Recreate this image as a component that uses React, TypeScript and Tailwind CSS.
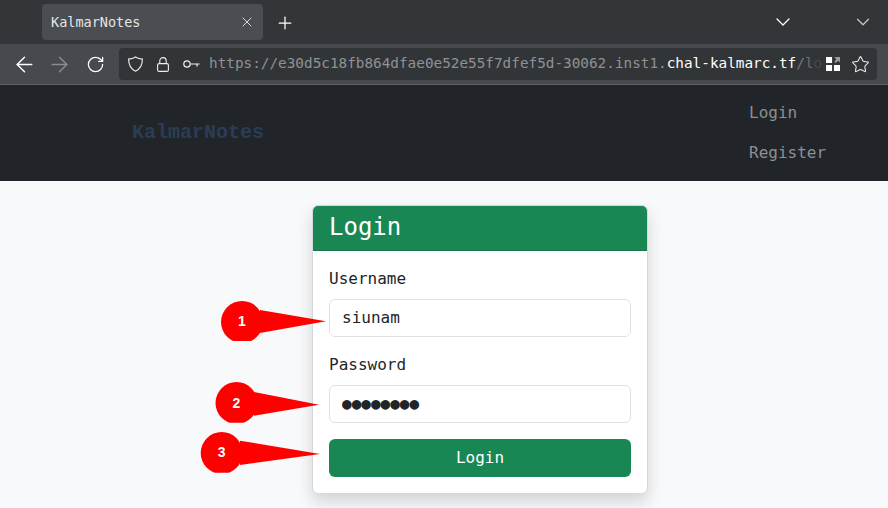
import { ArrowLeft, ArrowRight, ChevronDown, Plus, RotateCw, Star, X } from 'lucide-react';

const mono = "font-['DejaVu_Sans_Mono','Liberation_Mono',monospace]";

function ShieldIcon() {
    return (
        <svg width="15" height="16" viewBox="0 0 15 16" fill="none" stroke="#f0f0f0" strokeWidth="1.1">
            <path d="M7.500 1C9.500 2.300 12 3 14.400 3.100C14.400 9 12.500 13 7.500 15.200C2.500 13 .6 9 .6 3.100C3 3 5.500 2.300 7.500 1z" />
        </svg>
    );
}

function LockIcon() {
    return (
        <svg width="12" height="15" viewBox="0 0 12 15" fill="none" stroke="#f0f0f0" strokeWidth="1.1">
            <rect x=".6" y="6.600" width="10.800" height="7.800" rx="1.500" />
            <path d="M2.800 6.600V3.800a3.200 3.200 0 0 1 6.400 0v2.800" />
        </svg>
    );
}

function KeyIcon() {
    return (
        <svg width="17" height="10" viewBox="0 0 17 10" fill="none" stroke="#f0f0f0" strokeWidth="1.2">
            <circle cx="4" cy="5" r="3.200" />
            <path d="M7.500 5h9M14 5v2.500" />
        </svg>
    );
}

function QrIcon() {
    return (
        <svg width="14" height="14" viewBox="0 0 15 15">
            <path d="M0 0h6.500v6.500H0zM0 8.500h6.500V15H0zM8.500 8.500H15V15H8.500z" fill="#fff" />
            <path d="M9 0h6v6l-2-2-2.500 2.500-1.500-1.500L11 2.500z" fill="#9a9c9f" />
        </svg>
    );
}

// red callout markers drawn over the form
function Callouts() {
    const marks = [
        { n: '1', cx: 242, cy: 322, points: '260,310 326,321.300 260,333', clip: 341, textY: 326 },
        { n: '2', cx: 236.500, cy: 403, points: '254,392 319,404.700 254,415.700', clip: 422.700, textY: 407.500 },
        { n: '3', cx: 221.700, cy: 453, points: '240,440.700 320,454 240,465', clip: 472.700, textY: 457 },
    ];
    return (
        <svg className="absolute top-0 left-0 pointer-events-none" width="888" height="508">
            {marks.map((m) => (
                <g key={m.n}>
                    <clipPath id={`clip-${m.n}`}>
                        <rect x="0" y={m.clip - 60} width="400" height="60" />
                    </clipPath>
                    <g clipPath={`url(#clip-${m.n})`} fill="#ff0000">
                        <circle cx={m.cx} cy={m.cy} r="21" />
                        <polygon points={m.points} />
                    </g>
                    <text
                        x={m.cx}
                        y={m.textY}
                        textAnchor="middle"
                        fill="#fff"
                        fontSize="14"
                        fontWeight="700"
                        fontFamily="'Liberation Sans', sans-serif"
                    >
                        {m.n}
                    </text>
                </g>
            ))}
        </svg>
    );
}

function Field({ label, value }: { label: string; value: string }) {
    return (
        <div className="flex flex-col">
            <label className="h-[24px] mb-[8px] text-[16px] leading-[24px] text-[#212529]">{label}</label>
            <input
                readOnly
                value={value}
                className={`${mono} h-[38px] w-full rounded-[6px] border border-[#dee2e6] bg-white px-[12px] pb-[1px] text-[16px] text-[#212529] outline-none`}
            />
        </div>
    );
}

export default function App() {
    return (
        <div className={`${mono} relative h-[508px] w-[888px] overflow-hidden bg-[#f8f9fa]`}>
            {/* Browser tabs */}
            <div className="flex h-[44px] items-start bg-[#323639] pl-[42px] pt-[4px]">
                <div className="flex h-[36px] w-[221px] items-center justify-between rounded-[4px] bg-[#4a4d51] pl-[9px] pr-[8px]">
                    <span className="text-[13.500px] text-[#e6e6e6]">KalmarNotes</span>
                    <X className="size-[16px] text-[#e6e6e6]" strokeWidth={1.4} />
                </div>
                <Plus className="ml-[12px] mt-[9px] size-[20px] text-white" strokeWidth={1.5} />
                <div className="ml-auto mr-[14px] mt-[6px] flex items-center gap-[57px]">
                    <ChevronDown className="size-[24px] text-white" strokeWidth={1.3} />
                    <ChevronDown className="size-[22px] text-[#c8c8c8]" strokeWidth={1.3} />
                </div>
            </div>

            {/* Browser toolbar */}
            <div className="flex h-[41px] items-center border-b border-[#5d6064] bg-[#46494d] pl-[12px] pr-[11px]">
                <ArrowLeft className="size-[25px] shrink-0 text-white" strokeWidth={1.4} />
                <ArrowRight className="ml-[10px] size-[25px] shrink-0 text-[#8a8c8f]" strokeWidth={1.4} />
                <RotateCw className="ml-[14px] size-[19px] shrink-0 text-white" strokeWidth={1.6} />
                <div className="ml-[14px] flex h-[32px] min-w-0 flex-1 items-center rounded-[4px] bg-[#323538] pl-[9px] pr-[7px]">
                    <span className="shrink-0"><ShieldIcon /></span>
                    <span className="ml-[14px] shrink-0"><LockIcon /></span>
                    <span className="ml-[14px] shrink-0"><KeyIcon /></span>
                    <div className="ml-[9px] w-[616px] shrink-0 whitespace-nowrap text-[14.350px] text-[#8f9194]">
                        https://e30d5c18fb864dfae0e52e55f7dfef5d-30062.inst1.
                        <span className="text-white">chal-kalmarc.tf</span>
                        <span className="text-[#77797c]">/</span>
                        <span className="text-[#6a6c6f]">l</span>
                        <span className="text-[#45484b]">o</span>
                    </div>
                    <span className="ml-[1px] shrink-0"><QrIcon /></span>
                    <Star className="ml-[11px] size-[19px] shrink-0 text-[#f0f0f0]" strokeWidth={1.3} />
                </div>
            </div>

            {/* Site navbar */}
            <div className="flex h-[96px] justify-between bg-[#212529] pl-[132px]">
                <div className="self-center font-['Liberation_Mono',monospace] text-[20px] font-bold text-[#2b3d55]">
                    KalmarNotes
                </div>
                <div className="flex w-[139px] flex-col gap-[16px] pt-[16px] text-[16px] leading-[24px] text-[#8c8f92]">
                    <span>Login</span>
                    <span>Register</span>
                </div>
            </div>

            {/* Login card */}
            <div className="pl-[312px] pt-[24px]">
                <div className="w-[336px] overflow-hidden rounded-[6px] border border-[#d5d7d9] bg-white shadow-[0_8px_16px_rgba(0,0,0,0.15)]">
                    <div className="h-[45px] border-b border-[#157347] bg-[#198754] px-[16px] text-[24px] leading-[42px] text-white">
                        Login
                    </div>
                    <div className="flex flex-col gap-[16px] p-[16px]">
                        <Field label="Username" value="siunam" />
                        <Field label="Password" value="●●●●●●●●" />
                        <button className="h-[38px] rounded-[6px] bg-[#198754] text-[16px] text-white">Login</button>
                    </div>
                </div>
            </div>

            <Callouts />
        </div>
    );
}
